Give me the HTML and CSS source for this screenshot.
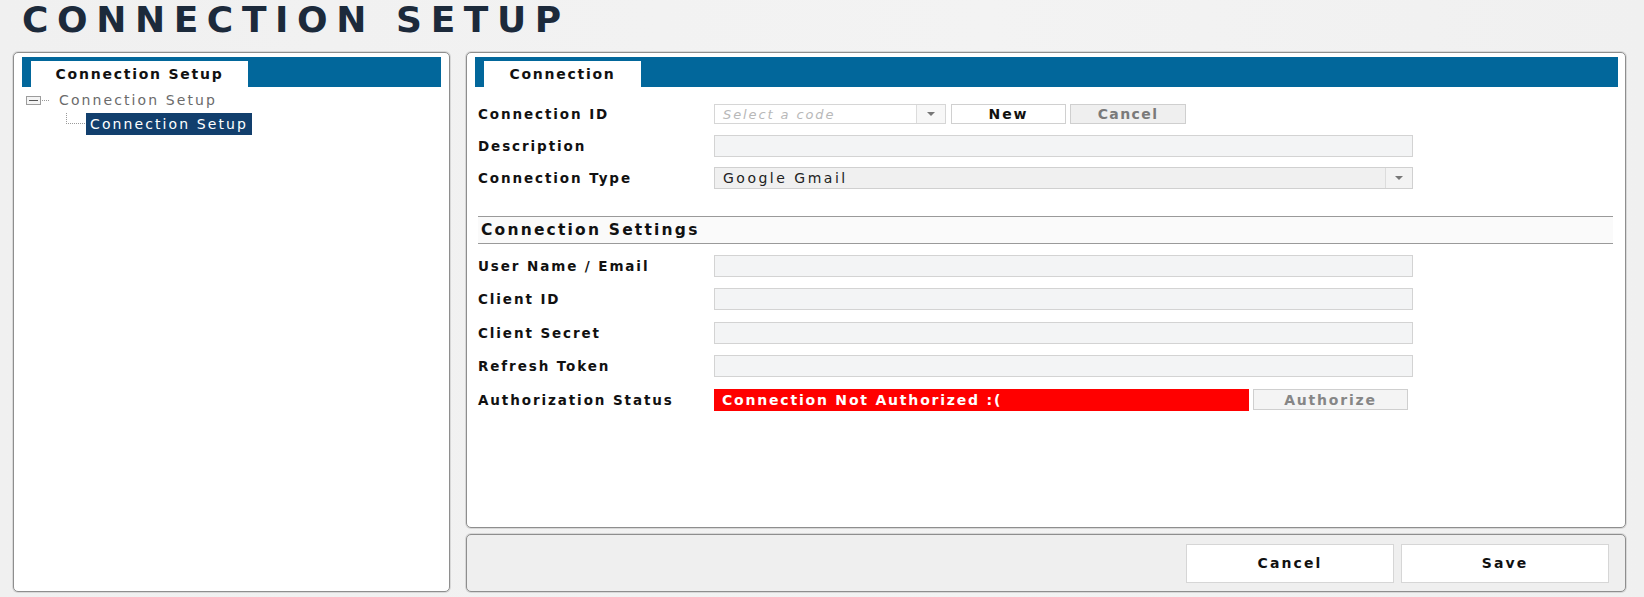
FILE: index.html
```html
<!DOCTYPE html>
<html lang="en">
<head>
<meta charset="utf-8">
<title>Connection Setup</title>
<link rel="stylesheet" href="styles.css">
</head>
<body>
<h1 class="page-title">CONNECTION SETUP</h1>
<div class="workspace">
  <section class="panel tree-panel">
    <div class="tabbar"><div class="tab">Connection Setup</div></div>
    <ul class="tree">
      <li class="tree-row">
        <svg class="tree-icon" width="25" height="22" viewBox="0 0 25 22">
          <rect x="0.5" y="7.5" width="14" height="8" fill="#f4f4f4" stroke="#9c9c9c"/>
          <line x1="3" y1="11.5" x2="12" y2="11.5" stroke="#555" stroke-width="1"/>
          <line x1="16" y1="11.5" x2="24" y2="11.5" stroke="#9a9a9a" stroke-dasharray="1 1"/>
        </svg>
        <span class="tree-text">Connection Setup</span>
      </li>
      <li class="tree-row child">
        <svg class="tree-icon" width="26" height="22" viewBox="0 0 26 22">
          <line x1="6.5" y1="0" x2="6.5" y2="10" stroke="#9a9a9a" stroke-dasharray="1 1"/>
          <line x1="6" y1="10.5" x2="26" y2="10.5" stroke="#9a9a9a" stroke-dasharray="1 1"/>
        </svg>
        <span class="tree-text selected">Connection Setup</span>
      </li>
    </ul>
  </section>
  <div class="right-col">
    <section class="panel form-panel">
      <div class="tabbar"><div class="tab">Connection</div></div>
      <div class="form">
        <div class="row">
          <div class="label">Connection ID</div>
          <div class="combo code">
            <span class="combo-text placeholder">Select a code</span>
            <span class="combo-arrow"><i class="caret"></i></span>
          </div>
          <button class="btn btn-new">New</button>
          <button class="btn btn-cancel">Cancel</button>
        </div>
        <div class="row">
          <div class="label">Description</div>
          <div class="field"></div>
        </div>
        <div class="row">
          <div class="label">Connection Type</div>
          <div class="combo type">
            <span class="combo-text">Google Gmail</span>
            <span class="combo-arrow"><i class="caret"></i></span>
          </div>
        </div>
        <div class="section-head">Connection Settings</div>
        <div class="settings">
          <div class="row tall">
            <div class="label">User Name / Email</div>
            <div class="field"></div>
          </div>
          <div class="row tall">
            <div class="label">Client ID</div>
            <div class="field"></div>
          </div>
          <div class="row tall">
            <div class="label">Client Secret</div>
            <div class="field"></div>
          </div>
          <div class="row tall">
            <div class="label">Refresh Token</div>
            <div class="field"></div>
          </div>
          <div class="row tall">
            <div class="label">Authorization Status</div>
            <div class="status">Connection Not Authorized :(</div>
            <button class="btn btn-authorize">Authorize</button>
          </div>
        </div>
      </div>
    </section>
    <section class="panel action-bar">
      <button class="btn btn-lg">Cancel</button>
      <button class="btn btn-lg">Save</button>
    </section>
  </div>
</div>
</body>
</html>
```
FILE: styles.css
```css
* { box-sizing: border-box; }
html, body { margin: 0; }
body {
  width: 1644px;
  height: 597px;
  overflow: hidden;
  background: linear-gradient(90deg, #f0f0f0 0%, #f3f3f3 60%, #f0f0f0 100%);
  font-family: "DejaVu Sans", "Liberation Sans", sans-serif;
  font-size: 14px;
  letter-spacing: 1.9px;
  color: #111;
}
.page-title {
  margin: 0;
  height: 52px;
  padding: 1px 0 0 22px;
  font-size: 36px;
  line-height: 38px;
  font-weight: bold;
  letter-spacing: 8.6px;
  color: #1c2a3b;
}
.workspace {
  display: flex;
  gap: 16px;
  height: 540px;
  padding: 0 18px 0 13px;
}
.panel {
  background: #fff;
  border: 1px solid #8e8e8e;
  border-radius: 5px;
  box-shadow: 0 0 0 1px #d8d8d8;
}
.tree-panel {
  width: 437px;
  flex: none;
  padding: 4px 8px;
}
.right-col {
  flex: 1;
  display: flex;
  flex-direction: column;
  gap: 6px;
}
.form-panel {
  flex: 1;
  padding: 4px 7px 0 8px;
}
.tabbar {
  height: 30px;
  background: #02679b;
  display: flex;
  align-items: flex-end;
  padding-left: 9px;
}
.tab {
  height: 26px;
  background: #fff;
  font-weight: bold;
  font-size: 14px;
  letter-spacing: 1.75px;
  display: flex;
  align-items: center;
  justify-content: center;
}
.tree-panel .tab { width: 217px; }
.form-panel .tab { width: 157px; }

/* tree */
.tree {
  list-style: none;
  margin: 0;
  padding: 2px 0 0 4px;
}
.tree-row {
  display: flex;
  align-items: center;
  height: 22px;
}
.tree-row.child {
  margin-top: 2px;
  padding-left: 34px;
}
.tree-icon { flex: none; display: block; }
.tree-row:first-child .tree-icon { margin-right: 8px; }
.tree-text {
  color: #6b6b6b;
  font-size: 14px;
  letter-spacing: 2.1px;
  line-height: 22px;
}
.tree-text.selected {
  background: #123f6d;
  color: #fff;
  padding: 0 4px 0 4px;
}

/* form */
.form { padding: 11px 5px 0 3px; }
.row {
  display: flex;
  align-items: center;
  height: 32px;
}
.row.tall { height: 33.5px; }
.label {
  width: 236px;
  flex: none;
  font-weight: bold;
  font-size: 13.5px;
}
.field {
  width: 699px;
  height: 22px;
  background: #f3f4f5;
  border: 1px solid #d3d3d3;
}
.combo {
  display: flex;
  align-items: stretch;
  border: 1px solid #d6d6d6;
}
.combo.code {
  width: 232px;
  height: 20px;
  background: #fff;
}
.combo.type {
  width: 699px;
  height: 22px;
  background: #f0f0f0;
  border-color: #d0d0d0;
}
.combo-text {
  flex: 1;
  padding-left: 8px;
  display: flex;
  align-items: center;
  font-size: 14px;
  letter-spacing: 2.5px;
  color: #222;
}
.combo-text.placeholder {
  font-style: italic;
  color: #b8b8b8;
  font-size: 13px;
  letter-spacing: 1.9px;
}
.combo-arrow {
  flex: none;
  width: 29px;
  border-left: 1px solid #dcdcdc;
  background: #f7f7f7;
  display: flex;
  align-items: center;
  justify-content: center;
}
.combo.type .combo-arrow { width: 27px; background: #f3f3f3; }
.caret {
  width: 0;
  height: 0;
  border-left: 4px solid transparent;
  border-right: 4px solid transparent;
  border-top: 4px solid #777;
}
.btn {
  font: inherit;
  letter-spacing: inherit;
  font-weight: bold;
  font-size: 14px;
  padding: 0;
  cursor: pointer;
}
.btn-new {
  margin-left: 5px;
  width: 115px;
  height: 20px;
  background: #fff;
  border: 1px solid #d0d0d0;
  color: #111;
}
.btn-cancel {
  margin-left: 4px;
  width: 116px;
  height: 20px;
  background: #efefef;
  border: 1px solid #cfcfcf;
  color: #7a7a7a;
  letter-spacing: 1.4px;
}
.section-head {
  margin-top: 22px;
  height: 28px;
  border-top: 1px solid #9a9a9a;
  border-bottom: 1px solid #9a9a9a;
  background: #fafafa;
  padding-left: 3px;
  display: flex;
  align-items: center;
  font-weight: bold;
  font-size: 15.5px;
  letter-spacing: 2.2px;
}
.settings { padding-top: 5px; }
.status {
  width: 535px;
  height: 22px;
  background: #ff0000;
  color: #fff;
  font-weight: bold;
  font-size: 14px;
  letter-spacing: 1.8px;
  padding-left: 8px;
  display: flex;
  align-items: center;
}
.btn-authorize {
  margin-left: 4px;
  width: 155px;
  height: 21px;
  background: #f4f4f4;
  border: 1px solid #cfcfcf;
  color: #868686;
  letter-spacing: 1.8px;
}

/* action bar */
.action-bar {
  flex: none;
  height: 58px;
  background: #efefef;
  display: flex;
  justify-content: flex-end;
  align-items: center;
  gap: 7px;
  padding-right: 16px;
}
.btn-lg {
  width: 208px;
  height: 39px;
  background: #fff;
  border: 1px solid #d6d6d6;
  color: #111;
  letter-spacing: 2.1px;
}
```
